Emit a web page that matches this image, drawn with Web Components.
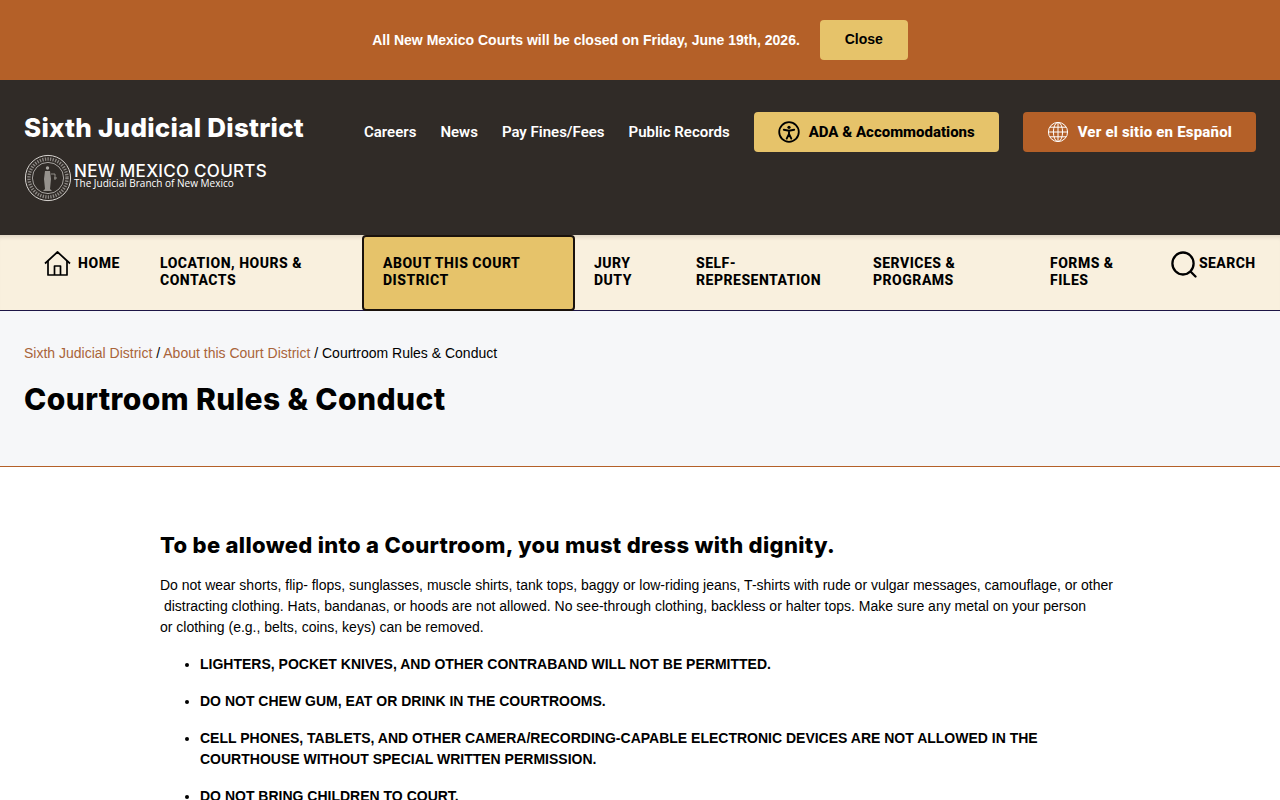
<!DOCTYPE html>
<html lang="en">
<head>
<meta charset="utf-8">
<title>Courtroom Rules &amp; Conduct</title>
<style>
html, body { margin: 0; padding: 0; background: #fff; overflow: hidden; height: 800px; }
body { font-family: "Liberation Sans", Arial, sans-serif; color: #000; }
</style>
</head>
<body>
<alert-banner>All New Mexico Courts will be closed on Friday, June 19th, 2026.</alert-banner>
<site-header></site-header>
<main-nav></main-nav>
<page-title heading="Courtroom Rules &amp; Conduct"></page-title>
<page-content></page-content>

<script>
const headFont = '"Inter", "Liberation Sans", sans-serif'
const navFont = '"Roboto", "Liberation Sans", sans-serif'

class AlertBanner extends HTMLElement {
	constructor() {
		super()
		this.attachShadow({ mode: 'open' })
		this.shadowRoot.innerHTML = `
      <style>
        :host {
          display: flex;
          height: 80px;
          background: #b46028;
          align-items: center;
          justify-content: center;
          gap: 20px;
          box-sizing: border-box;
        }
        span {
          color: #fff;
          font: bold 14px "Liberation Sans", sans-serif;
        }
        button {
          width: 88px;
          height: 40px;
          border: 0;
          border-radius: 4px;
          padding: 0 0 2px;
          background: #e6c36a;
          color: #000;
          font: bold 14px "Liberation Sans", sans-serif;
        }
      </style>
      <span><slot></slot></span>
      <button>Close</button>
    `
	}
}

class SiteHeader extends HTMLElement {
	constructor() {
		super()
		this.attachShadow({ mode: 'open' })
		this.shadowRoot.innerHTML = `
      <style>
        :host {
          display: flex;
          height: 155px;
          background: #302b27;
          box-sizing: border-box;
          padding: 32px 24px 0;
          color: #fff;
          font-family: ${navFont};
        }
        .brand { width: 340px; flex: none; }
        .name {
          font: 800 26px/32px ${headFont};
          letter-spacing: .25px;
          margin: 0;
          white-space: nowrap;
        }
        .logo { display: flex; align-items: center; margin-top: 10px; height: 48px; }
        .logo svg { width: 48px; height: 48px; flex: none; }
        .court { margin: 0 0 4px 2px; }
        .court b { display: block; font: 500 17px/14px "Inter", sans-serif; letter-spacing: .28px; white-space: nowrap; }
        .court small { display: block; font: 500 10px/10px "Open Sans", sans-serif; white-space: nowrap; }
        nav { display: flex; gap: 24px; height: 40px; align-items: center; font-weight: 600; font-size: 15px; white-space: nowrap; }
        .btn {
          height: 40px;
          border-radius: 4px;
          display: flex;
          align-items: center;
          box-sizing: border-box;
          font-weight: 800;
          font-size: 15px;
          white-space: nowrap;
          gap: 9px;
        }
        .ada { background: #e6c36a; color: #000; width: 245px; margin-left: 24px; padding-left: 25px; }
        .esp { background: #b46028; color: #fff; width: 233px; margin-left: 24px; padding-left: 24px; letter-spacing: .2px; }
      </style>
      <div class="brand">
        <h2 class="name">Sixth Judicial District</h2>
        <div class="logo">
          <svg viewBox="0 0 48 48" fill="none" stroke="#d9d6d2">
            <circle cx="24" cy="24" r="22.6" stroke-width="1"/>
            <circle cx="24" cy="24" r="19" stroke-width="3.4" stroke-dasharray="1.3 1.3" opacity=".55"/>
            <circle cx="24" cy="24" r="15.6" stroke-width=".7"/>
            <g stroke="#a8a5a0" fill="#a8a5a0">
              <circle cx="23.5" cy="14" r="1.7" stroke="none"/>
              <path d="M21 17h5l1 8-1 10 2 2h-9l2-2-1-10z" stroke="none" opacity=".85"/>
              <path d="M27 20h4v6M30 24h3" fill="none" stroke-width=".8"/>
            </g>
          </svg>
          <div class="court"><b>NEW MEXICO COURTS</b><small>The Judicial Branch of New Mexico</small></div>
        </div>
      </div>
      <nav><span>Careers</span><span>News</span><span>Pay Fines/Fees</span><span>Public Records</span></nav>
      <div class="btn ada">
        <svg width="22" height="22" viewBox="0 0 22 22" fill="none" stroke="#000" style="margin-left:-1px">
          <circle cx="11" cy="11" r="9.8" stroke-width="1.8"/>
          <circle cx="11" cy="6.3" r="1.6" fill="#000" stroke="none"/>
          <path d="M5.8 8.8 11 9.8l5.2-1M11 9.8v3.4M11 13l-2.3 4.6M11 13l2.3 4.6" stroke-width="1.9" stroke-linecap="round"/>
        </svg>
        ADA &amp; Accommodations
      </div>
      <div class="btn esp">
        <svg width="22" height="22" viewBox="0 0 22 22" fill="none" stroke="#fff" stroke-width="1">
          <circle cx="11" cy="11" r="9.6"/>
          <ellipse cx="11" cy="11" rx="4.6" ry="9.6"/>
          <path d="M11 1.4v19.2M1.4 11h19.2M2.8 6.2h16.4M2.8 15.8h16.4"/>
        </svg>
        Ver el sitio en Español
      </div>
    `
	}
}

class NavItem extends HTMLElement {
	constructor() {
		super()
		this.attachShadow({ mode: 'open' })
		this.shadowRoot.innerHTML = `
      <style>
        :host {
          display: block;
          flex: none;
          box-sizing: border-box;
          height: 76px;
          padding: 20px 19px 0;
          font: 800 14px/17px ${navFont};
          color: #000;
          letter-spacing: .5px;
        }
        :host([active]) {
          background: #e6c36a;
          border: 2px solid #1a120c;
          border-radius: 4px;
          padding: 18px 19px 0;
          position: relative;
          z-index: 1;
        }
      </style>
      <slot></slot>
    `
	}
}

class MainNav extends HTMLElement {
	constructor() {
		super()
		this.attachShadow({ mode: 'open' })
		this.shadowRoot.innerHTML = `
      <style>
        :host {
          display: flex;
          height: 76px;
          box-sizing: border-box;
          background: #f9f0de;
          border-bottom: 1px solid #1d1546;
          box-shadow: inset 0 5px 4px -3px rgba(60,45,30,.14);
          padding-left: 20px;
          font: 800 14px/17px ${navFont};
          letter-spacing: .4px;
        }
        .icon { display: flex; gap: 7px; align-items: flex-start; padding-top: 16px; box-sizing: border-box; flex: none; }
        .icon span { margin-top: 4px; }
        .home { width: 121px; padding-left: 24px; letter-spacing: .6px; }
        .search { gap: 2px; padding-left: 19px; }
      </style>
      <div class="icon home">
        <svg width="27" height="25" viewBox="0 0 27 25" fill="none" stroke="#000" stroke-width="1.7" stroke-linejoin="round">
          <path d="M1 12.5 13.5 1 26 12.5"/>
          <path d="M4 10v14h19V10"/>
          <path d="M10.5 24V15h6v9"/>
        </svg>
        <span>HOME</span>
      </div>
      <nav-item style="width:221px">LOCATION, HOURS &amp;<br>CONTACTS</nav-item>
      <nav-item active style="width:213px">ABOUT THIS COURT<br>DISTRICT</nav-item>
      <nav-item style="width:102px">JURY<br>DUTY</nav-item>
      <nav-item style="width:177px">SELF-<br>REPRESENTATION</nav-item>
      <nav-item style="width:177px">SERVICES &amp;<br>PROGRAMS</nav-item>
      <nav-item style="width:121px">FORMS &amp;<br>FILES</nav-item>
      <div class="icon search">
        <svg width="26" height="27" viewBox="0 0 26 27" fill="none" stroke="#000" stroke-width="2.3">
          <ellipse cx="12" cy="12.5" rx="10.6" ry="11"/>
          <path d="M20 21l4.5 4.5" stroke-linecap="round"/>
        </svg>
        <span>SEARCH</span>
      </div>
    `
	}
}

class PageTitle extends HTMLElement {
	constructor() {
		super()
		this.attachShadow({ mode: 'open' })
		this.shadowRoot.innerHTML = `
      <style>
        :host {
          display: block;
          height: 156px;
          box-sizing: border-box;
          background: #f6f7f9;
          border-bottom: 1px solid #b46028;
          padding: 34px 24px 0;
        }
        .crumbs { font: 14px/17px "Liberation Sans", sans-serif; color: #000; }
        a { color: #a9643a; text-decoration: none; }
        h1 { font: 800 30px/36px ${headFont}; letter-spacing: .4px; margin: 19px 0 0; }
      </style>
      <div class="crumbs"><a>Sixth Judicial District</a> / <a>About this Court District</a> / Courtroom Rules &amp; Conduct</div>
      <h1>${this.getAttribute('heading').replace('&', '&amp;')}</h1>
    `
	}
}

class PageContent extends HTMLElement {
	constructor() {
		super()
		this.attachShadow({ mode: 'open' })
		this.shadowRoot.innerHTML = `
      <style>
        :host {
          display: block;
          padding: 64px 160px 0;
          font: 14px/21px "Liberation Sans", sans-serif;
          color: #000;
        }
        h2 { font: 800 22px/28px ${headFont}; letter-spacing: .32px; margin: 0 0 16px; }
        p { margin: 0; white-space: nowrap; }
        ul { margin: 16px 0 0; padding: 0 0 0 40px; }
        li { margin-bottom: 16px; font-weight: bold; }
      </style>
      <h2>To be allowed into a Courtroom, you must dress with dignity.</h2>
      <p>Do not wear shorts, flip- flops, sunglasses, muscle shirts, tank tops, baggy or low-riding jeans, T-shirts with rude or vulgar messages, camouflage, or other<br>&nbsp;distracting clothing. Hats, bandanas, or hoods are not allowed. No see-through clothing, backless or halter tops. Make sure any metal on your person<br>or clothing (e.g., belts, coins, keys) can be removed.</p>
      <ul>
        <li>LIGHTERS, POCKET KNIVES, AND OTHER CONTRABAND WILL NOT BE PERMITTED.</li>
        <li>DO NOT CHEW GUM, EAT OR DRINK IN THE COURTROOMS.</li>
        <li>CELL PHONES, TABLETS, AND OTHER CAMERA/RECORDING-CAPABLE ELECTRONIC DEVICES ARE NOT ALLOWED IN THE COURTHOUSE WITHOUT SPECIAL WRITTEN PERMISSION.</li>
        <li>DO NOT BRING CHILDREN TO COURT.</li>
      </ul>
    `
	}
}

customElements.define('alert-banner', AlertBanner)
customElements.define('site-header', SiteHeader)
customElements.define('nav-item', NavItem)
customElements.define('main-nav', MainNav)
customElements.define('page-title', PageTitle)
customElements.define('page-content', PageContent)
</script>
</body>
</html>
